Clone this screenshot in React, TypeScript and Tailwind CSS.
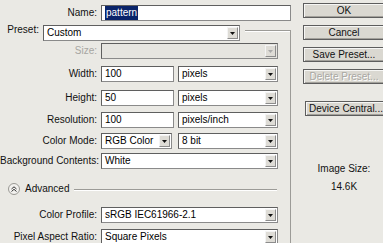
import React from 'react'

const font = { fontFamily: '"Liberation Sans", Arial, sans-serif' }

function Label({ children, w = 'w-[101px]', disabled }: { children: React.ReactNode; w?: string; disabled?: boolean }) {
  return (
    <div className={`${w} shrink-0 text-right pr-[4px] whitespace-nowrap ${disabled ? 'text-[#a7a6a2]' : 'text-[#111]'}`}>
      {children}
    </div>
  )
}

function Field({ children, className = '' }: { children?: React.ReactNode; className?: string }) {
  return (
    <div className={`h-[16px] bg-white border border-[#8a8a8a] border-t-[#5f5f5f] border-l-[#5f5f5f] flex items-center pl-[3px] overflow-hidden whitespace-nowrap ${className}`}>
      {children}
    </div>
  )
}

function Arrow({ disabled }: { disabled?: boolean }) {
  return (
    <div className="w-[11px] h-[12px] mr-[1px] shrink-0 bg-[#dedcd6] border border-[#8c8c8c] border-t-[#f4f4f4] border-l-[#f4f4f4] flex items-center justify-center">
      <svg width="5" height="3" viewBox="0 0 5 3">
        <path d="M0 0h5L2.5 3z" fill={disabled ? '#a9a9a9' : '#111'} />
      </svg>
    </div>
  )
}

function Select({ value, className = '', disabled }: { value?: string; className?: string; disabled?: boolean }) {
  return (
    <div className={`h-[16px] border border-[#8a8a8a] border-t-[#5f5f5f] border-l-[#5f5f5f] flex items-center ${disabled ? 'bg-[#e6e5e0]' : 'bg-white'} ${className}`}>
      <div className="flex-1 pl-[3px] overflow-hidden whitespace-nowrap">{value}</div>
      <Arrow disabled={disabled} />
    </div>
  )
}

function Btn({ children, disabled, className = '' }: { children: React.ReactNode; disabled?: boolean; className?: string }) {
  return (
    <div className={`h-[15px] w-[82px] bg-[#dad8d1] border border-[#5d5d5d] shadow-[inset_1px_1px_0_#f6f6f4,inset_-1px_-1px_0_#a3a19b] flex items-center justify-center whitespace-nowrap ${disabled ? 'text-[#a9a8a3] [text-shadow:1px_1px_0_#fff]' : 'text-[#111]'} ${className}`}>
      {children}
    </div>
  )
}

export default function App() {
  return (
    <div className="w-[383px] h-[243px] overflow-hidden bg-[#eae9e4] text-[10px] leading-none flex" style={font}>
      {/* left column */}
      <div className="w-[291px] shrink-0 flex flex-col pt-[5px]">
        <div className="flex items-center h-[16px]">
          <Label>Name:</Label>
          <Field className="flex-1">
            <span className="bg-[#0a246a] text-white px-[1px] py-[2px]">pattern</span>
          </Field>
        </div>

        <div className="flex h-[16px] mt-[4px]">
          <Label w="w-[43px]">Preset:</Label>
          <Select value="Custom" className="w-[197px]" />
          <div className="flex-1 ml-[5px] mt-[5px] border-t border-r border-[#9c9b97] shadow-[inset_0_1px_0_#fff]" />
        </div>

        <div className="flex-1 border-r border-[#9c9b97] flex flex-col">
          <div className="flex items-center h-[16px] mt-[2px]">
            <Label disabled>Size:</Label>
            <Select disabled className="w-[177px]" />
          </div>

          <div className="flex items-center h-[16px] mt-[7px]">
            <Label>Width:</Label>
            <Field className="w-[73px]">100</Field>
            <Select value="pixels" className="w-[100px] ml-[4px]" />
          </div>

          <div className="flex items-center h-[16px] mt-[8px]">
            <Label>Height:</Label>
            <Field className="w-[73px]">50</Field>
            <Select value="pixels" className="w-[100px] ml-[4px]" />
          </div>

          <div className="flex items-center h-[16px] mt-[6px]">
            <Label>Resolution:</Label>
            <Field className="w-[73px]">100</Field>
            <Select value="pixels/inch" className="w-[100px] ml-[4px]" />
          </div>

          <div className="flex items-center h-[16px] mt-[5px]">
            <Label>Color Mode:</Label>
            <Select value="RGB Color" className="w-[71px]" />
            <Select value="8 bit" className="w-[100px] ml-[6px]" />
          </div>

          <div className="flex items-center h-[16px] mt-[4px]">
            <Label>Background Contents:</Label>
            <Select value="White" className="w-[177px]" />
          </div>

          <div className="flex items-center h-[14px] mt-[13px] pl-[8px]">
            <div className="w-[12px] h-[12px] rounded-full border border-[#9a9994] bg-[#f2f1ee] flex items-center justify-center">
              <svg width="6" height="6" viewBox="0 0 6 6">
                <path d="M0.5 3L3 0.8L5.5 3M0.5 5.5L3 3.3L5.5 5.5" fill="none" stroke="#333" strokeWidth="1" />
              </svg>
            </div>
            <span className="ml-[5px] text-[#111]">Advanced</span>
            <div className="flex-1 ml-[5px] mr-[13px] border-t border-[#9c9b97] shadow-[0_1px_0_#fff]" />
          </div>

          <div className="flex items-center h-[16px] mt-[11px]">
            <Label>Color Profile:</Label>
            <Select value="sRGB IEC61966-2.1" className="w-[177px]" />
          </div>

          <div className="flex items-center h-[16px] mt-[6px]">
            <Label>Pixel Aspect Ratio:</Label>
            <Select value="Square Pixels" className="w-[177px]" />
          </div>
        </div>
      </div>

      {/* right column */}
      <div className="flex-1 flex flex-col pl-[12px] pt-[3px]">
        <Btn>OK</Btn>
        <Btn className="mt-[7px]">Cancel</Btn>
        <Btn className="mt-[7px]">Save Preset...</Btn>
        <Btn disabled className="mt-[7px]">Delete Preset...</Btn>
        <Btn className="mt-[17px] ml-[2px]">Device Central...</Btn>
        <div className="mt-[48px] w-[82px] text-center text-[#111]">Image Size:</div>
        <div className="mt-[8px] w-[82px] text-center text-[#111]">14.6K</div>
      </div>
    </div>
  )
}
